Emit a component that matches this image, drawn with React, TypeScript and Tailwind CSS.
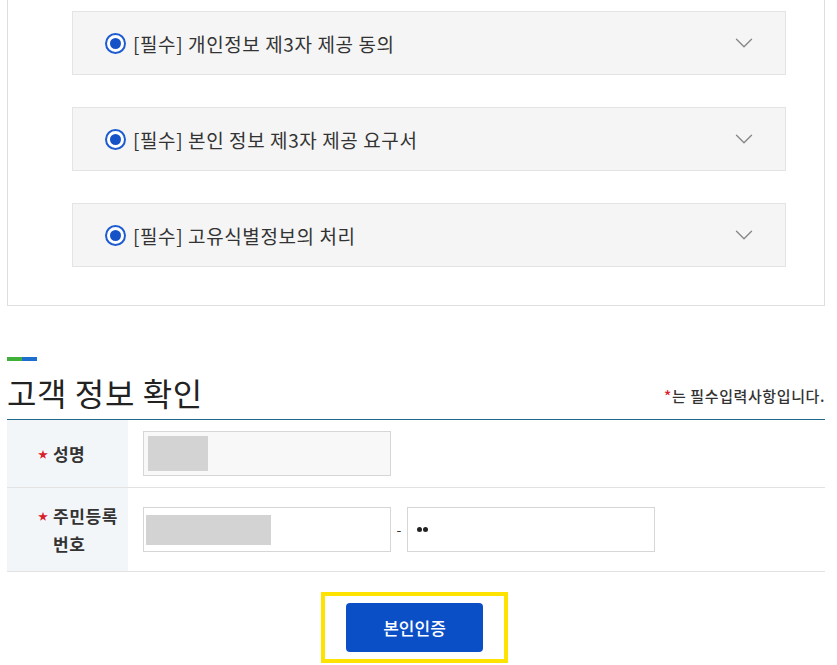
import { ChevronDown } from 'lucide-react';

const terms = [
  '[필수] 개인정보 제3자 제공 동의',
  '[필수] 본인 정보 제3자 제공 요구서',
  '[필수] 고유식별정보의 처리',
];

function Radio() {
  return (
    <span className="w-[21px] h-[21px] rounded-full border-2 border-[#1d5bd0] bg-white flex items-center justify-center shrink-0">
      <span className="w-[11px] h-[11px] rounded-full bg-[#1552c8]"></span>
    </span>
  );
}

export default function App() {
  return (
    <div
      className="w-[837px] h-[665px] bg-white overflow-hidden text-[#222]"
      style={{ fontFamily: '"Noto Sans CJK KR", "Noto Sans", sans-serif' }}
    >
      {/* agreement box */}
      <div className="ml-[7px] w-[818px] border border-t-0 border-[#dedede] pl-[64px] pr-[38px] pt-[11px] pb-[38px] flex flex-col gap-[32px]">
        {terms.map((t) => (
          <div
            key={t}
            className="h-[64px] bg-[#f5f5f5] border border-[#e4e4e4] flex items-center pl-[32px] pr-[26px]"
          >
            <Radio />
            <span className="ml-[7px] text-[19px] leading-none text-[#333] tracking-[0.6px]">{t}</span>
            <ChevronDown className="ml-auto text-[#888]" size={30} strokeWidth={1.1} />
          </div>
        ))}
      </div>

      {/* customer info */}
      <div className="ml-[7px] w-[818px] mt-[51px]">
        <div className="flex h-[4px]">
          <span className="w-[15px] bg-[#3fb13a]"></span>
          <span className="w-[15px] bg-[#1c6fd1]"></span>
        </div>
        <div className="flex items-end justify-between h-[59px] border-b border-[#1f6a8c]">
          <h2 className="text-[32px] leading-none text-[#222] pb-[11px] tracking-[0.6px]">고객 정보 확인</h2>
          <p className="text-[15px] leading-none text-[#333] font-medium pb-[16px] tracking-[0.6px]">
            <span className="text-[#d8202c]">*</span>는 필수입력사항입니다.
          </p>
        </div>

        <div className="flex h-[68px] border-b border-[#e2e2e2]">
          <div className="w-[121px] bg-[#f3f6f9] flex items-center pl-[31px]">
            <span className="text-[#d8202c] text-[10px] mr-[5px]">★</span>
            <span className="text-[17px] font-bold text-[#333] tracking-[0.4px]">성명</span>
          </div>
          <div className="flex-1 flex items-center pl-[15px]">
            <div className="w-[248px] h-[45px] border border-[#d6d6d6] bg-[#f8f8f8] flex items-center pl-[4px]">
              <div className="w-[60px] h-[35px] bg-[#d3d3d3]"></div>
            </div>
          </div>
        </div>

        <div className="flex h-[84px] border-b border-[#e2e2e2]">
          <div className="w-[121px] bg-[#f3f6f9] flex items-center pl-[31px]">
            <div className="flex items-start">
              <span className="text-[#d8202c] text-[10px] mr-[5px] mt-[6px]">★</span>
              <span className="text-[17px] font-bold text-[#333] leading-[28px] tracking-[0.6px]">
                주민등록
                <br />
                번호
              </span>
            </div>
          </div>
          <div className="flex-1 flex items-center pl-[15px]">
            <div className="w-[248px] h-[45px] border border-[#d6d6d6] bg-white flex items-center pl-[2px]">
              <div className="w-[125px] h-[30px] bg-[#d3d3d3]"></div>
            </div>
            <span className="w-[16px] text-center text-[14px] text-[#333]">-</span>
            <div className="w-[248px] h-[45px] border border-[#d6d6d6] bg-white flex items-center pl-[9px] gap-[1px]">
              <span className="w-[5px] h-[5px] rounded-full bg-[#222]"></span>
              <span className="w-[5px] h-[5px] rounded-full bg-[#222]"></span>
            </div>
          </div>
        </div>
      </div>

      <div className="flex justify-center mt-[20px]">
        <div className="border-[4px] border-[#ffe300] px-[21px] pt-[7px] pb-[7px] ml-[-8px]">
          <button className="w-[137px] h-[49px] bg-[#0b4fc6] rounded-[4px] text-white text-[17px] font-medium">
            본인인증
          </button>
        </div>
      </div>
    </div>
  );
}
